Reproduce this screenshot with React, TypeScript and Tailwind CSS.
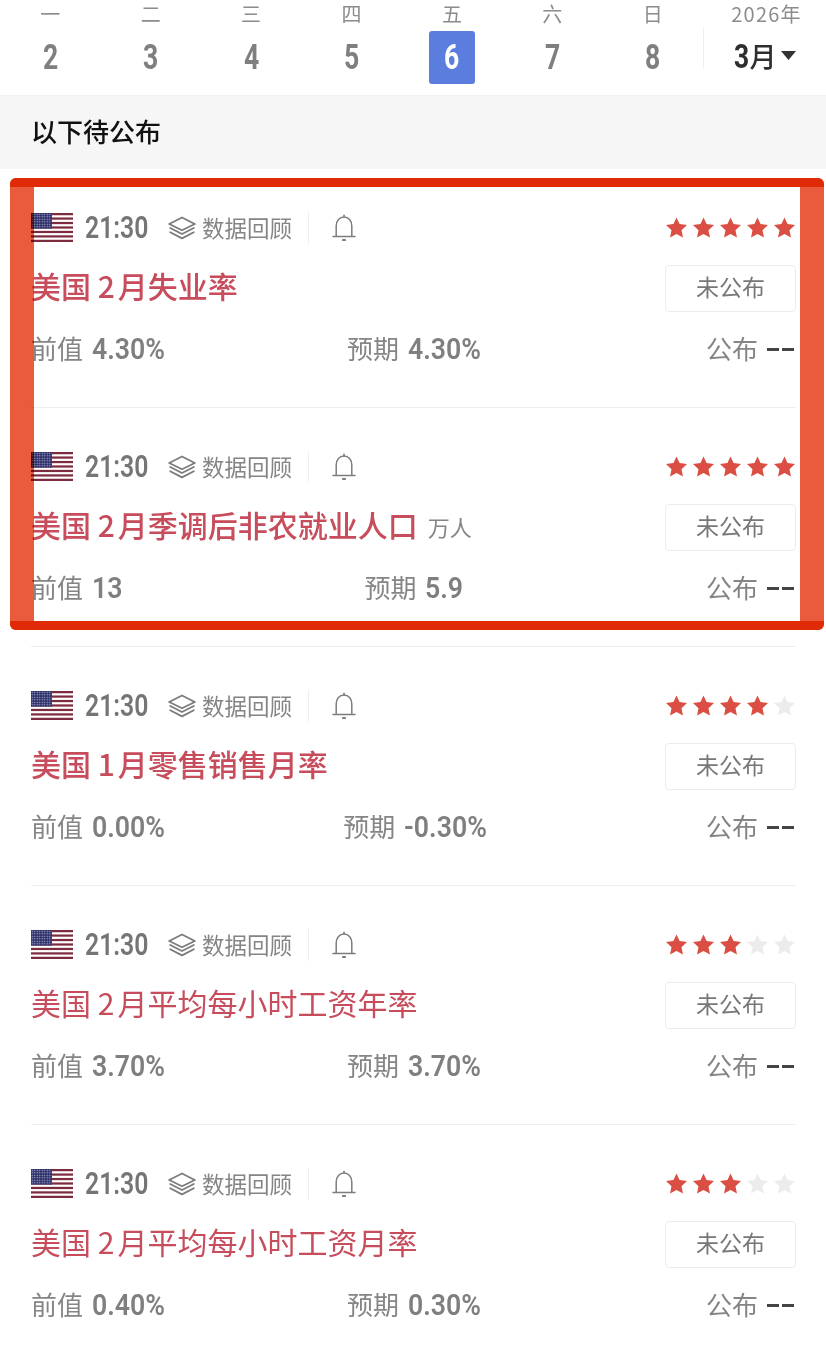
const cjk = "font-['Noto_Sans_CJK_SC','Noto_Sans',sans-serif]";
const din = "font-['Roboto','Noto_Sans_CJK_SC',sans-serif]";

const days = [
  { w: "一", d: "2" },
  { w: "二", d: "3" },
  { w: "三", d: "4" },
  { w: "四", d: "5" },
  { w: "五", d: "6", active: true },
  { w: "六", d: "7" },
  { w: "日", d: "8" },
];

const rows = [
  { m: "2", title: "失业率", prev: "4.30%", exp: "4.30%", stars: 5, medium: true },
  { m: "2", title: "季调后非农就业人口", unit: "万人", prev: "13", exp: "5.9", stars: 5, medium: true },
  { m: "1", title: "零售销售月率", prev: "0.00%", exp: "-0.30%", stars: 4, medium: true },
  { m: "2", title: "平均每小时工资年率", prev: "3.70%", exp: "3.70%", stars: 3 },
  { m: "2", title: "平均每小时工资月率", prev: "0.40%", exp: "0.30%", stars: 3 },
];

const adv: Record<string, number> = { ".": 0.27, "%": 0.74, "-": 0.28, ":": 0.25 };

/* Narrow DIN-like numerals: Roboto squeezed horizontally, with the flow width computed from the string. */
function Num({ text, size, sx, className }: { text: string; size: number; sx: number; className: string }) {
  const em = text.split("").reduce((a, c) => a + (adv[c] ?? 0.5615), 0);
  return (
    <span className="inline-block whitespace-nowrap" style={{ width: em * size * sx }}>
      <span className={`${din} inline-block origin-left leading-none ${className}`} style={{ fontSize: size, scale: `${sx} 1` }}>
        {text}
      </span>
    </span>
  );
}

function Flag({ id }: { id: string }) {
  const stripes = [0, 2, 4, 6, 8, 10, 12];
  return (
    <svg width="42" height="29" viewBox="0 0 42 29" className="mb-[2px] shrink-0">
      <defs>
        <pattern id={id} width="2.5" height="2.5" patternUnits="userSpaceOnUse">
          <rect width="2.5" height="2.5" fill="#2c2d68" />
          <circle cx="1.25" cy="1.25" r="0.7" fill="#b4b8d8" />
        </pattern>
      </defs>
      <rect width="42" height="29" fill="#fff" />
      {stripes.map((i) => (
        <rect key={i} y={(i * 29) / 13} width="42" height={29 / 13} fill="#7d2b3f" />
      ))}
      <rect width="21" height="15.6" fill={`url(#${id})`} />
    </svg>
  );
}

function Layers() {
  return (
    <svg width="28" height="24" viewBox="0 0 28 24" fill="none" stroke="#7b7b7b" strokeWidth="1.8" strokeLinejoin="round" strokeLinecap="round" className="shrink-0">
      <path d="M14 1.5 L26.8 8 L14 14.2 L1.2 8 Z" />
      <path d="M2.2 12 L14 18 L25.8 12" />
      <path d="M2.2 16.2 L14 22.4 L25.8 16.2" />
    </svg>
  );
}

function Bell() {
  return (
    <svg width="24" height="28" viewBox="0 0 24 28" fill="none" stroke="#7d7d7d" strokeWidth="1.5" strokeLinecap="round" strokeLinejoin="round" className="shrink-0">
      <path d="M12 1.2 V3" />
      <path d="M4.2 21.8 V12 C4.2 6.6 7.6 3 12 3 C16.4 3 19.8 6.6 19.8 12 V21.8" />
      <path d="M1 22.6 H23" />
      <path d="M10.8 26 H13.2" strokeWidth="1.8" />
    </svg>
  );
}

function Star({ on }: { on: boolean }) {
  return (
    <svg width="21" height="21" viewBox="0 0 24 24" className="shrink-0">
      <path
        d="M12 0.5 L15.5 8.1 L24 9.2 L17.7 15 L19.4 23.4 L12 19.3 L4.6 23.4 L6.3 15 L0 9.2 L8.5 8.1 Z"
        fill={on ? "#da4e43" : "#ececec"}
      />
    </svg>
  );
}

function Value({ label, value, className }: { label: string; value: string; className: string }) {
  return (
    <div className={`flex items-center gap-[9px] whitespace-nowrap ${className}`}>
      <span className={`${cjk} pb-[2px] text-[26px] leading-none text-[#858585]`}>{label}</span>
      <Num text={value} size={30} sx={0.89} className="font-semibold text-[#7f7f7f]" />
    </div>
  );
}

function Row({ r, i, last }: { r: (typeof rows)[number]; i: number; last: boolean }) {
  return (
    <div className={`ml-[31px] mr-[30px] h-[239px] pt-[39px] ${last ? "" : "border-b border-[#eeeeee]"}`}>
      <div className="flex h-[40px] items-center justify-between">
        <div className="flex items-center">
          <Flag id={`flagdots${i}`} />
          <span className="ml-[12px] flex w-[83px] pb-[2px]">
            <Num text="21:30" size={31} sx={0.8} className="font-semibold text-[#757575]" />
          </span>
          <Layers />
          <span className={`${cjk} ml-[6px] pb-[2px] text-[22.5px] leading-none text-[#858585]`}>数据回顾</span>
          <span className="mx-[16px] h-[32px] w-px bg-[#efefef]" />
          <span className="ml-[7px] flex">
            <Bell />
          </span>
        </div>
        <div className="flex gap-[6px] pb-[2px] pr-[1px]">
          {[0, 1, 2, 3, 4].map((k) => (
            <Star key={k} on={k < r.stars} />
          ))}
        </div>
      </div>
      <div className="mt-[16px] flex h-[48px] items-center justify-between">
        <div className="flex items-end whitespace-nowrap pb-[7px]">
          <span className={`${cjk} text-[30px] leading-none ${r.medium ? "font-medium" : "font-normal"} text-[#c74c5c]`}>
            美国 <span className="mr-[3px]">{r.m}</span>月{r.title}
          </span>
          {r.unit && <span className={`${cjk} mb-[2px] ml-[10px] text-[22px] leading-none text-[#858585]`}>{r.unit}</span>}
        </div>
        <div className={`${cjk} flex h-[47px] w-[131px] items-center justify-center rounded-[4px] border border-[#ececec] pb-[3px] text-[23px] text-[#777777]`}>
          未公布
        </div>
      </div>
      <div className="mt-[17px] grid h-[40px] grid-cols-3 items-center">
        <Value label="前值" value={r.prev} className="justify-self-start" />
        <Value label="预期" value={r.exp} className="justify-self-center" />
        <div className="flex items-center justify-self-end whitespace-nowrap pr-[2px]">
          <span className={`${cjk} pb-[2px] text-[26px] leading-none text-[#858585]`}>公布</span>
          <span className="ml-[9px] flex gap-[3px]">
            <span className="h-[3px] w-[12px] bg-[#444444]" />
            <span className="h-[3px] w-[12px] bg-[#444444]" />
          </span>
        </div>
      </div>
    </div>
  );
}

export default function App() {
  return (
    <div className={`relative h-[1358px] w-[826px] overflow-hidden bg-white ${cjk}`}>
      <div className="flex h-[96px] border-b border-[#f1f1f1]">
        <div className="grid w-[703px] grid-cols-7">
          {days.map((x) => (
            <div key={x.d} className="flex flex-col items-center">
              <span className={`${cjk} mt-[3px] h-[24px] text-[20px] leading-[22px] text-[#8c8c8c]`}>{x.w}</span>
              <span className={`mt-[4px] flex h-[53px] w-[46px] items-center justify-center rounded-[3px] ${x.active ? "bg-[#5b7ddd]" : ""}`}>
                <Num text={x.d} size={35} sx={0.76} className={`font-bold ${x.active ? "text-white" : "text-[#7f7f7f]"}`} />
              </span>
            </div>
          ))}
        </div>
        <div className="flex flex-1 flex-col items-center">
          <span className={`${cjk} mt-[3px] h-[24px] pl-[4px] text-[20px] leading-[22px] tracking-[1.2px] text-[#8c8c8c]`}>2026年</span>
          <div className="mt-[1px] flex h-[41px] w-full items-center justify-center border-l border-[#efefef] pt-[16px]">
            <span className={`${cjk} flex items-center text-[27px] leading-none font-medium text-[#2e2e2e]`}>
              <Num text="3" size={33} sx={0.8} className="font-bold text-[#2e2e2e]" />
              <span className="ml-[1px] pb-[2px]">月</span>
            </span>
            <svg width="15" height="9" viewBox="0 0 15 9" className="mb-[2px] ml-[5px]">
              <path d="M0 0 H15 L7.5 9 Z" fill="#333333" />
            </svg>
          </div>
        </div>
      </div>
      <div className="flex h-[73px] items-center bg-[#f6f6f6] pb-[3px] pl-[31px]">
        <span className={`${cjk} text-[26px] leading-none font-medium text-[#111111]`}>以下待公布</span>
      </div>
      {rows.map((r, i) => (
        <Row key={i} r={r} i={i} last={i === rows.length - 1} />
      ))}
      <div className="pointer-events-none absolute left-[10px] top-[178px] h-[452px] w-[814px] overflow-hidden rounded-[6px]">
        <div className="absolute inset-0 border-x-[24px] border-[#ea5a3c] mix-blend-multiply" />
        <div className="absolute inset-0 border-y-[9px] border-[#e12b07]" />
      </div>
    </div>
  );
}
